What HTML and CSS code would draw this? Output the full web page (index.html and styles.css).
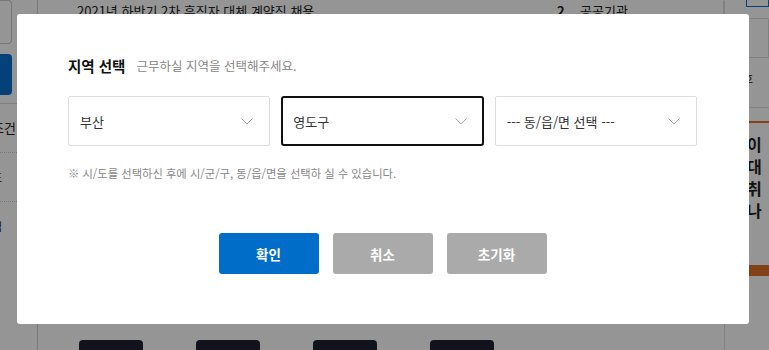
FILE: index.html
```html
<!DOCTYPE html>
<html lang="ko">
<head>
    <meta charset="UTF-8">
    <meta name="viewport" content="width=device-width, initial-scale=1.0">
    <title>지역 선택</title>
    <link rel="stylesheet" href="styles.css">
</head>
<body>
    <div class="page">
        <aside class="side-left">
            <div class="side-box"></div>
            <div class="side-btn"></div>
            <div class="side-item">조건</div>
            <div class="side-item dotted">포</div>
            <div class="side-item dotted">력</div>
        </aside>
        <main class="board">
            <div class="board-row">
                <span class="row-title">2021년 하반기 2차 휴직자 대체 계약직 채용</span>
                <span class="row-num">2</span>
                <span class="row-cat">공공기관</span>
            </div>
            <div class="thumbs">
                <div class="thumb"></div>
                <div class="thumb"></div>
                <div class="thumb"></div>
                <div class="thumb"></div>
            </div>
        </main>
        <aside class="side-right">
            <div class="side-box"></div>
            <div class="side-box tall"></div>
            <div class="side-text">호</div>
            <div class="banner">
                <b>이</b><b>대</b><b>취</b><b>나</b>
            </div>
            <div class="banner-bar"></div>
        </aside>
    </div>

    <div class="dim">
        <div class="modal">
            <div class="modal-head">
                <h2>지역 선택</h2>
                <span class="sub">근무하실 지역을 선택해주세요.</span>
            </div>
            <div class="selects">
                <div class="select">
                    <span>부산</span>
                    <svg width="12" height="7" viewBox="0 0 12 7"><path d="M0.5 0.5 L6 6 L11.5 0.5" fill="none" stroke="#aaa" stroke-width="1"/></svg>
                </div>
                <div class="select active">
                    <span>영도구</span>
                    <svg width="12" height="7" viewBox="0 0 12 7"><path d="M0.5 0.5 L6 6 L11.5 0.5" fill="none" stroke="#aaa" stroke-width="1"/></svg>
                </div>
                <div class="select">
                    <span>--- 동/읍/면 선택 ---</span>
                    <svg width="12" height="7" viewBox="0 0 12 7"><path d="M0.5 0.5 L6 6 L11.5 0.5" fill="none" stroke="#aaa" stroke-width="1"/></svg>
                </div>
            </div>
            <p class="note">※ 시/도를 선택하신 후에 시/군/구, 동/읍/면을 선택하 실 수 있습니다.</p>
            <div class="buttons">
                <button class="btn primary">확인</button>
                <button class="btn">취소</button>
                <button class="btn">초기화</button>
            </div>
        </div>
    </div>
</body>
</html>
```

FILE: styles.css
```css
html, body {
    margin: 0;
    padding: 0;
    height: 100%;
    overflow: hidden;
    font-family: "Noto Sans CJK KR", "Noto Sans", sans-serif;
    background: #fff;
    color: #222;
}

/* page under the dim layer */
.page {
    display: flex;
    height: 350px;
}
.side-left {
    width: 37px;
    border-right: 1px solid #ccc;
    display: flex;
    flex-direction: column;
}
.side-left .side-box {
    width: 12px;
    height: 44px;
    border: 1px solid #ccc;
    border-left: none;
    border-radius: 0 4px 4px 0;
    box-sizing: border-box;
}
.side-btn {
    width: 12px;
    height: 41px;
    margin-top: 10px;
    background: #0a6fd0;
    border-radius: 0 4px 4px 0;
}
.side-item {
    width: 17px;
    height: 48px;
    border-top: 1px solid #ddd;
    font-size: 13px;
    line-height: 48px;
    text-indent: -8px;
    overflow: hidden;
    white-space: nowrap;
    margin-top: 8px;
}
.side-item.dotted {
    border-top: 1px dotted #ccc;
    margin-top: 0;
    font-size: 11px;
}
.board {
    flex: 1;
    display: flex;
    flex-direction: column;
    justify-content: space-between;
}
.board-row {
    display: flex;
    align-items: center;
    height: 28px;
    margin-top: -4px;
    font-size: 13px;
    padding-left: 39px;
}
.row-title {
    width: 480px;
}
.row-num {
    width: 23px;
    font-weight: bold;
}
.row-cat {
    flex: 1;
    border-right: 1px solid #ddd;
}
.thumbs {
    display: flex;
    gap: 53px;
    padding-left: 41px;
    height: 10px;
}
.thumb {
    width: 64px;
    background: #223;
    border-radius: 4px 4px 0 0;
}
.side-right {
    width: 40px;
    border-left: 1px solid #ddd;
    display: flex;
    flex-direction: column;
    padding-left: 4px;
}
.side-right .side-box {
    height: 6px;
    border: 1px solid #0a6fd0;
    border-top: none;
    margin-left: 17px;
}
.side-right .side-box.tall {
    height: 38px;
    border-color: #ddd;
    border-top: 1px solid #ddd;
    margin: 11px 0 0 0;
}
.side-text {
    font-size: 11px;
    line-height: 16px;
    margin-top: 12px;
    border-bottom: 1px solid #ddd;
    padding: 0 0 21px 14px;
}
.banner {
    border-top: 2px solid #e0702a;
    margin-top: 13px;
    display: flex;
    flex-direction: column;
    padding: 10px 0 0 18px;
    font-size: 16px;
    line-height: 22px;
    height: 144px;
    box-sizing: border-box;
}
.banner-bar {
    height: 11px;
    background: #e0702a;
}

/* dim layer and modal */
.dim {
    position: fixed;
    inset: 0;
    background: rgba(0, 0, 0, 0.415);
    padding: 14px 0 0 17px;
}
.modal {
    width: 732px;
    height: 310px;
    box-sizing: border-box;
    background: #fff;
    border-radius: 3px;
    padding: 42px 52px 0 51px;
}
.modal-head {
    display: flex;
    align-items: center;
    gap: 11px;
    height: 18px;
}
.modal-head h2 {
    margin: 0;
    font-size: 14.5px;
    font-weight: bold;
    color: #111;
}
.sub {
    font-size: 12.5px;
    color: #888;
}
.selects {
    display: flex;
    gap: 11px;
    margin-top: 22px;
}
.select {
    flex: 1;
    height: 50px;
    box-sizing: border-box;
    border: 1px solid #ddd;
    border-radius: 2px;
    display: flex;
    align-items: center;
    justify-content: space-between;
    padding: 0 16px 0 11px;
    font-size: 13px;
    color: #333;
}
.select.active {
    border: 2px solid #111;
    border-radius: 3px;
    padding: 0 15px 0 10px;
}
.note {
    margin: 19px 0 0 0;
    font-size: 11.3px;
    line-height: 16px;
    color: #888;
}
.buttons {
    display: flex;
    justify-content: center;
    gap: 14px;
    margin-top: 52px;
}
.btn {
    width: 100px;
    height: 41px;
    border: none;
    border-radius: 3px;
    background: #aaa;
    color: #fff;
    font-family: inherit;
    font-size: 13.5px;
    font-weight: bold;
}
.btn.primary {
    background: #006dc8;
}
```
